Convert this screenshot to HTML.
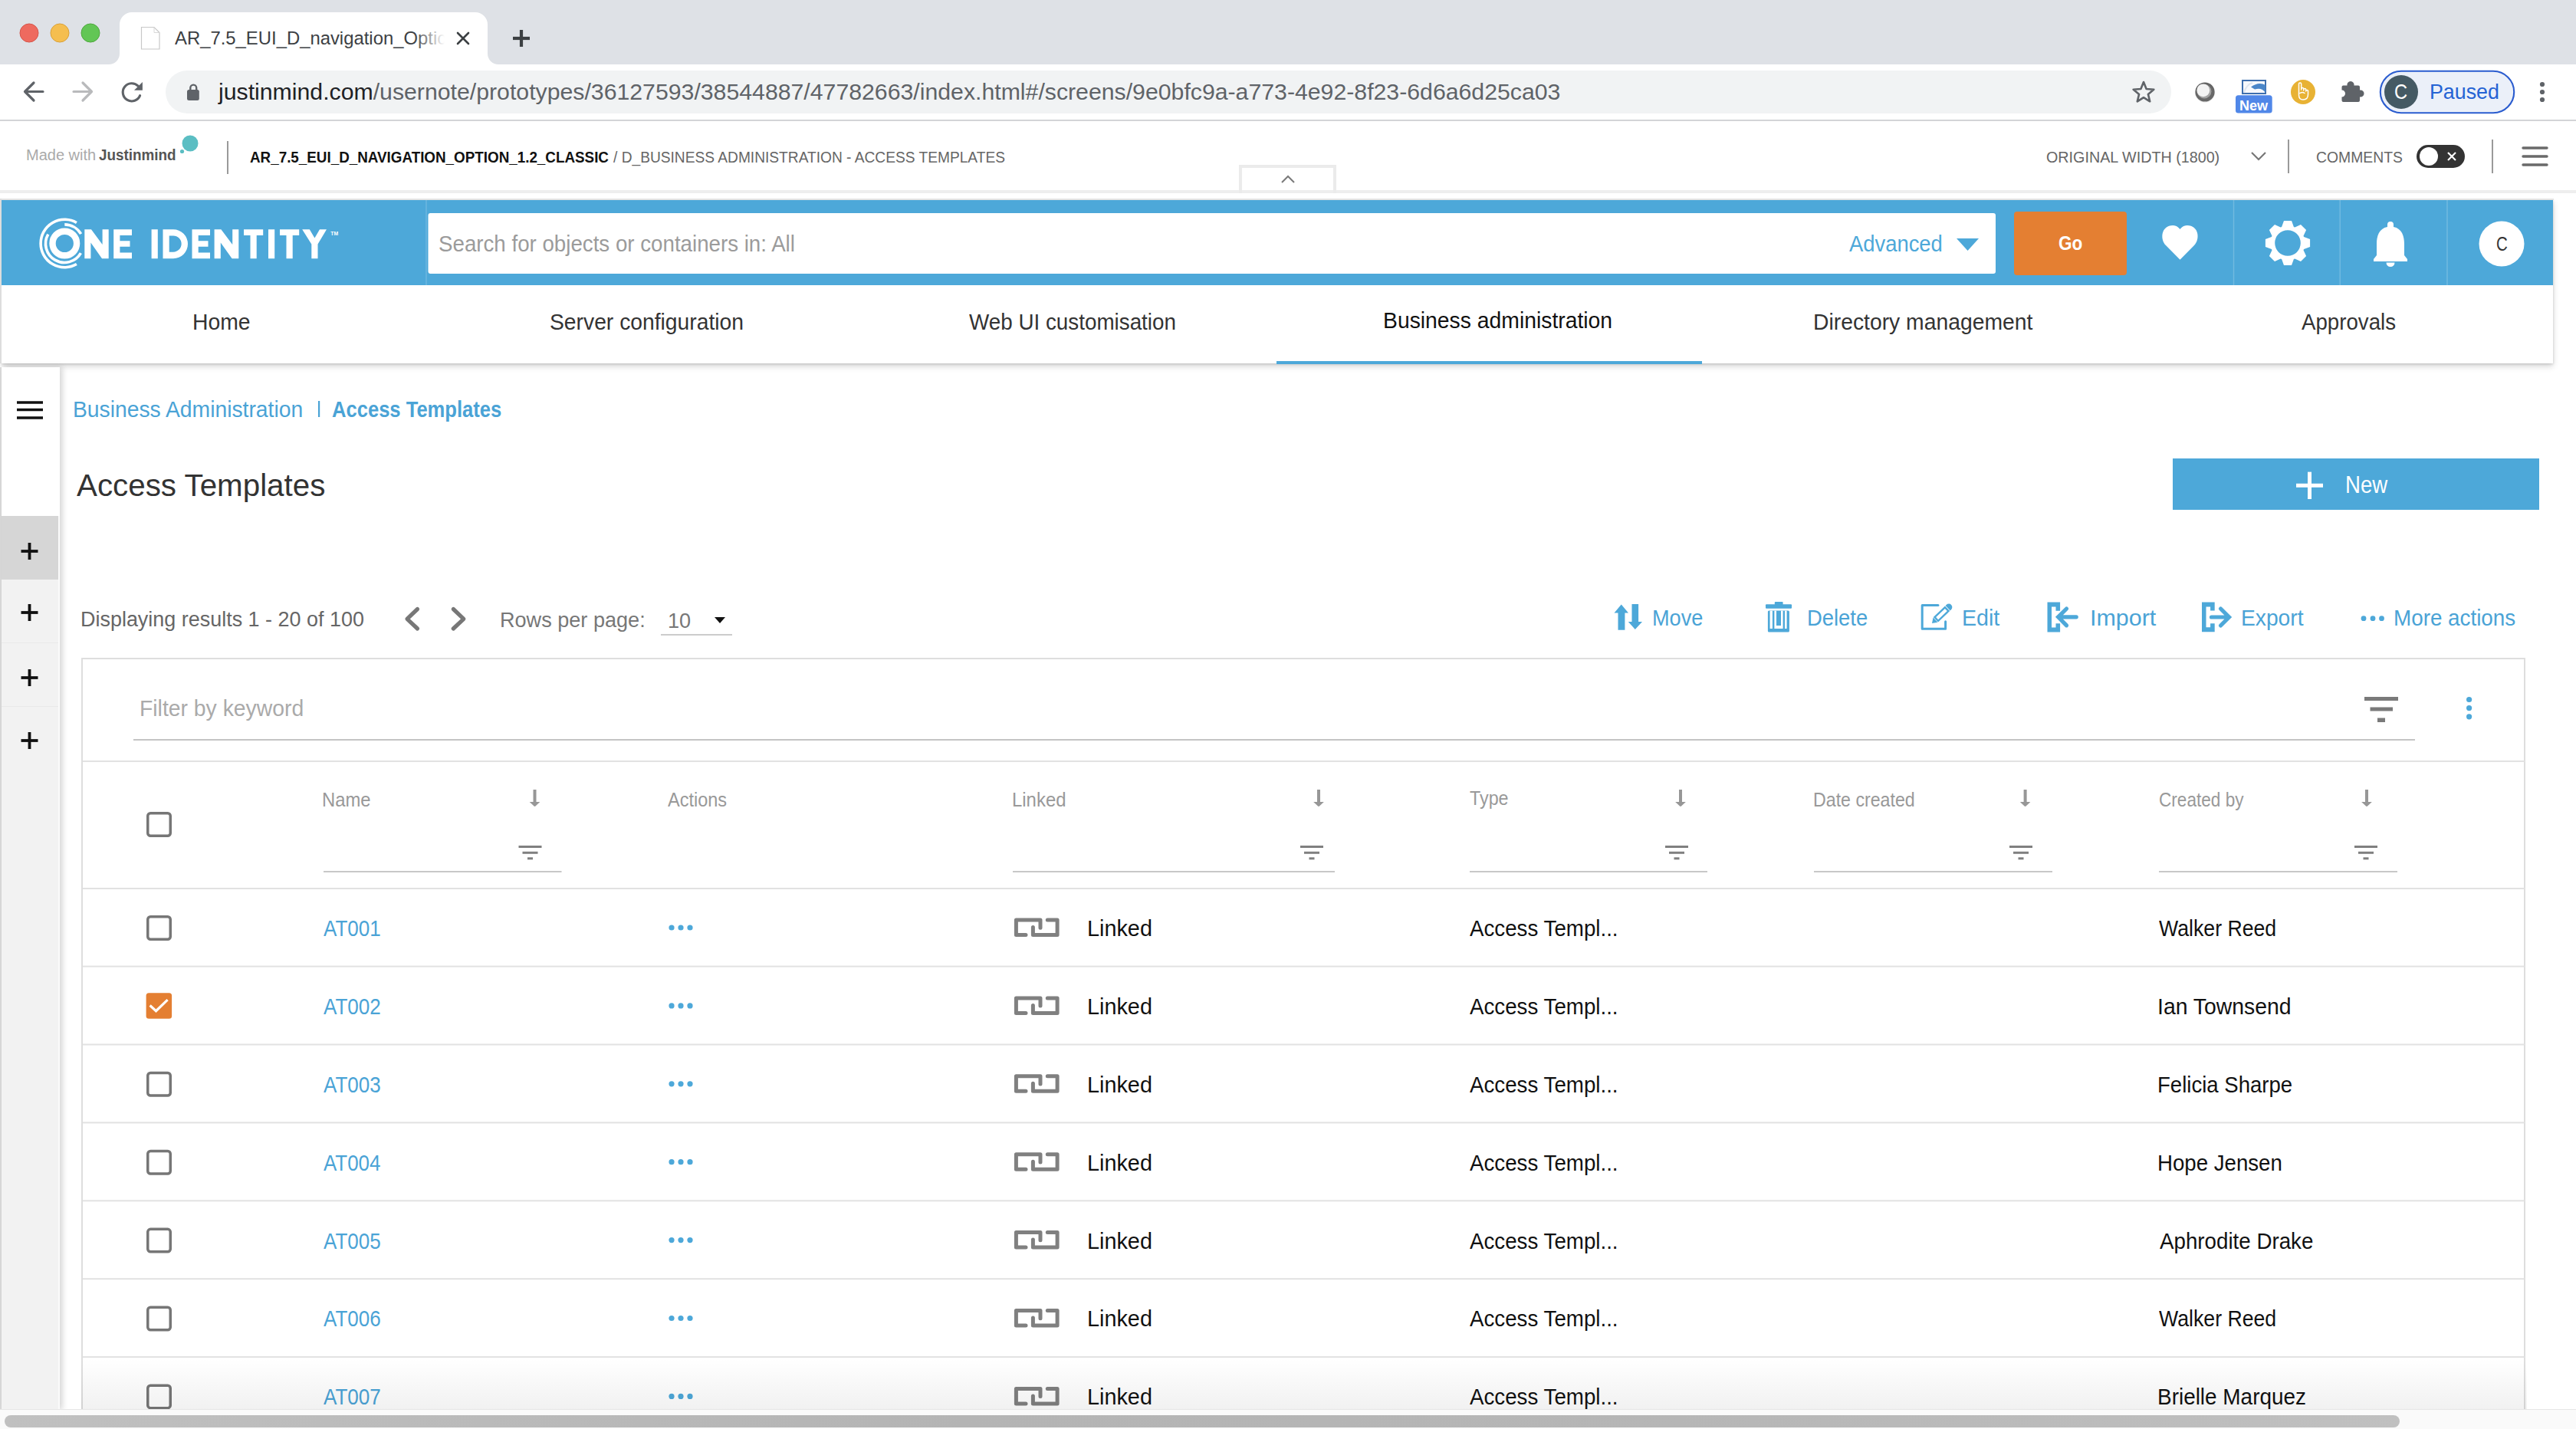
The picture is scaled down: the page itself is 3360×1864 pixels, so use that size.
<!DOCTYPE html>
<html><head><meta charset="utf-8"><title>Access Templates</title><style>
*{margin:0;padding:0;box-sizing:border-box}
html,body{width:3360px;height:1864px;overflow:hidden;background:#fff}
body{position:relative;font-family:"Liberation Sans",sans-serif}
.r{position:absolute}
.ov{position:absolute;left:0;top:0}
.t{position:absolute;white-space:nowrap;line-height:0;transform-origin:0 0;font-family:"Liberation Sans",sans-serif}
</style></head>
<body>

<div class="r" style="left:0;top:0;width:3360px;height:84px;background:#dee1e6"></div>
<div class="r" style="left:0;top:248px;width:3360px;height:4px;background:#eeeeee"></div>
<div class="r" style="left:2px;top:260px;width:3328px;height:214px;background:#fff;box-shadow:0 4px 8px rgba(0,0,0,0.16),0 1px 3px rgba(0,0,0,0.14)"></div>
<div class="r" style="left:0;top:252px;width:3360px;height:7px;background:#fff"></div>
<div class="r" style="left:0;top:259px;width:3331px;height:2px;background:#e3e3e3"></div>
<div class="r" style="left:0;top:259px;width:2px;height:215px;background:#dddddd"></div>
<div class="r" style="left:2px;top:261px;width:3328px;height:111px;background:#4da8d9"></div>
<div class="r" style="left:0;top:479px;width:2px;height:1360px;background:#dddddd"></div>
<div class="r" style="left:2px;top:479px;width:75.5px;height:1360px;background:#f2f2f2;box-shadow:3px 0 8px rgba(0,0,0,0.18)"></div>
<div class="r" style="left:2px;top:479px;width:75.5px;height:194px;background:#fff"></div>
<div class="r" style="left:2px;top:673px;width:75.5px;height:83px;background:#d6d6d6"></div>
<div class="r" style="left:2px;top:838px;width:75.5px;height:1px;background:#e9e9e9"></div>
<div class="r" style="left:2px;top:921px;width:75.5px;height:1px;background:#e9e9e9"></div>
<div class="r" style="left:75.6px;top:673px;width:2px;height:1166px;background:#fbfbfb"></div>

<svg class="ov" width="3360" height="1864" viewBox="0 0 3360 1864"><circle cx="38" cy="43" r="12" fill="#ee6a5f" stroke="#d5574c" stroke-width="1"/>
<circle cx="78" cy="43" r="12" fill="#f5be4f" stroke="#d9a13a" stroke-width="1"/>
<circle cx="118" cy="43" r="12" fill="#62c655" stroke="#4fa83f" stroke-width="1"/>
<path d="M142 84 A14 14 0 0 0 156 70 V32 A16 16 0 0 1 172 16 H620 A16 16 0 0 1 636 32 V70 A14 14 0 0 0 650 84 Z" fill="#ffffff" />
<path d="M184.5 35.5 H201 L208 42.5 V64 H184.5 Z" fill="#fff" stroke="#c8c8c8" stroke-width="1.2" />
<path d="M201 35.5 V42.5 H208" fill="none" stroke="#d8d8d8" stroke-width="1" />
<line x1="597" y1="43" x2="611" y2="57" stroke="#3c4043" stroke-width="2.6" stroke-linecap="round"/>
<line x1="611" y1="43" x2="597" y2="57" stroke="#3c4043" stroke-width="2.6" stroke-linecap="round"/>
<line x1="669" y1="50" x2="691" y2="50" stroke="#3c4043" stroke-width="4.2" stroke-linecap="butt"/>
<line x1="680" y1="39" x2="680" y2="61" stroke="#3c4043" stroke-width="4.2" stroke-linecap="butt"/>
<path d="M56 119.5 H33 M44 108 L32.5 119.5 L44 131" fill="none" stroke="#5f6368" stroke-width="3.2" stroke-linecap="round" stroke-linejoin="round"/>
<path d="M96 119.5 H119 M108 108 L119.5 119.5 L108 131" fill="none" stroke="#b9babc" stroke-width="3.2" stroke-linecap="round" stroke-linejoin="round"/>
<path d="M182.6 124.6 A11.6 11.6 0 1 1 180.1 112.2" fill="none" stroke="#5f6368" stroke-width="3.1" stroke-linecap="round"/>
<path d="M185.9 107 V117.8 H175 Z" fill="#5f6368" />
<rect x="216" y="92" width="2616" height="56" rx="28" fill="#f1f3f4"/>
<rect x="244" y="117" width="15.8" height="14" rx="2.5" fill="#5f6368"/>
<path d="M248.3 118 V114.6 A3.95 3.95 0 0 1 256.2 114.6 V118" fill="none" stroke="#5f6368" stroke-width="2.4" />
<polygon points="2796.0,107.0 2799.6,116.0 2809.3,116.7 2801.9,122.9 2804.2,132.3 2796.0,127.2 2787.8,132.3 2790.1,122.9 2782.7,116.7 2792.4,116.0" fill="none" stroke="#5f6368" stroke-width="2.6" stroke-linejoin="round"/>
<circle cx="2876" cy="120" r="12.6" fill="#686868"/>
<circle cx="2875.2" cy="119.2" r="9.2" fill="#a3a3a3"/>
<circle cx="2873.8" cy="117.8" r="8.4" fill="#f3f3f3"/>
<circle cx="2876" cy="120.8" r="12.6" fill="none" stroke="rgba(0,0,0,0.08)" stroke-width="1"/>
<rect x="2925" y="105" width="30" height="17" rx="0" fill="#f7f9fc" stroke="#3e6fae" stroke-width="2"/>
<path d="M2936 113.5 Q2946 106 2955 111 V121 Q2950 113.5 2941 116.5 Z" fill="#4a86c8" />
<path d="M2927 121 Q2930 110 2938 108" fill="none" stroke="#dfe6ef" stroke-width="2" />
<rect x="2916" y="124.2" width="47.7" height="23.3" rx="3.5" fill="#5087e8"/>
<text x="2939.5" y="143.6" font-family="Liberation Sans" font-weight="700" font-size="17.5" fill="#fff" text-anchor="middle" textLength="37" lengthAdjust="spacingAndGlyphs">New</text>
<circle cx="3004" cy="120" r="16" fill="#e8b234"/>
<path d="M2998.5 124 V109.5 A1.6 1.6 0 0 1 3001.7 109.5 V117 M3001.7 116 A1.5 1.5 0 0 1 3004.7 116 V118 M3004.7 117 A1.5 1.5 0 0 1 3007.7 117 V119 M3007.7 118.5 A1.5 1.5 0 0 1 3010.5 118.5 V123 Q3010.5 130 3004 130 Q2998.5 130 2998.5 124 M3000 121.5 Q3003 119.5 3006 121.5" fill="none" stroke="#fff" stroke-width="1.5" stroke-linecap="round" stroke-linejoin="round"/>
<path d="M3056.5 111.5 H3061.5 A4.6 4.6 0 1 1 3070.5 111.5 H3076 A2 2 0 0 1 3078 113.5 V117.5 A4.6 4.6 0 1 1 3078 126.5 V131 A2 2 0 0 1 3076 133 H3056.5 A2 2 0 0 1 3054.5 131 V126.5 A4.5 4.5 0 0 0 3054.5 117.5 V113.5 A2 2 0 0 1 3056.5 111.5 Z" fill="#5f6368" />
<rect x="3104.8" y="92.8" width="174.4" height="54.4" rx="27.2" fill="#ebf0f9" stroke="#2a5ccf" stroke-width="2.1"/>
<circle cx="3132" cy="120" r="22" fill="#455a64"/>
<circle cx="3316" cy="110" r="3.1" fill="#5f6368"/>
<circle cx="3316" cy="120" r="3.1" fill="#5f6368"/>
<circle cx="3316" cy="130" r="3.1" fill="#5f6368"/>
<rect x="0" y="156" width="3360" height="2" rx="0" fill="#d3d4d7"/>
<circle cx="248" cy="187" r="10.5" fill="#5bbec3"/>
<circle cx="237.5" cy="197.5" r="2.6" fill="#5bbec3"/>
<rect x="296" y="184" width="2" height="43" rx="0" fill="#9a9a9a"/>
<path d="M1618 252 V217 H1741 V252" fill="none" stroke="#ebebeb" stroke-width="4" />
<path d="M1672 238 L1680 230 L1688 238" fill="none" stroke="#7a7a7a" stroke-width="2" />
<path d="M2937 199 L2946 208 L2955 199" fill="none" stroke="#777" stroke-width="2.2" />
<rect x="2984" y="182" width="2" height="44" rx="0" fill="#9a9a9a"/>
<rect x="3152" y="189" width="63" height="30" rx="15" fill="#333333"/>
<circle cx="3168" cy="204" r="12" fill="#ffffff"/>
<line x1="3193" y1="199" x2="3203" y2="209" stroke="#fff" stroke-width="2.2" stroke-linecap="butt"/>
<line x1="3203" y1="199" x2="3193" y2="209" stroke="#fff" stroke-width="2.2" stroke-linecap="butt"/>
<rect x="3250" y="182" width="2" height="44" rx="0" fill="#9a9a9a"/>
<line x1="3291" y1="193" x2="3322" y2="193" stroke="#6a6a6a" stroke-width="3.4" stroke-linecap="round"/>
<line x1="3291" y1="204" x2="3322" y2="204" stroke="#6a6a6a" stroke-width="3.4" stroke-linecap="round"/>
<line x1="3291" y1="215" x2="3322" y2="215" stroke="#6a6a6a" stroke-width="3.4" stroke-linecap="round"/>
<circle cx="84.3" cy="317.5" r="15.8" fill="none" stroke="#fff" stroke-width="8.4"/>
<path d="M99.90 290.48 A31.2 31.2 0 1 0 99.90 344.52" fill="none" stroke="#fff" stroke-width="3.6" />
<path d="M84.30 292.90 A24.6 24.6 0 0 1 105.60 305.20" fill="none" stroke="#fff" stroke-width="3.6" />
<path d="M105.39 330.17 A24.6 24.6 0 0 1 62.78 305.57" fill="none" stroke="#fff" stroke-width="3.6" />
<path d="M110.3 337.3 V299.3 H119 L133.6 319 V299.3 H141.7 V337.3 H133 L118.4 316.6 V337.3 Z M148.2 299.3 H172 V307.0 H156.39999999999998 V314.2 H169.5 V321.7 H156.39999999999998 V329.6 H172 V337.3 H148.2 Z M197.6 299.3 H205.8 V337.3 H197.6 Z M212.5 299.3 H226 A19 19 0 0 1 226 337.3 H212.5 Z M220.7 307.4 V328.7 H226 A10.65 10.65 0 0 0 226 307.4 Z M250.5 299.3 H274 V307.0 H258.7 V314.2 H271.5 V321.7 H258.7 V329.6 H274 V337.3 H250.5 Z M279.6 337.3 V299.3 H288.4 L303.2 319 V299.3 H311.3 V337.3 H302.6 L287.8 316.6 V337.3 Z M318 299.3 H343.2 V307.0 H334.7 V337.3 H326.5 V307.0 H318 Z M350 299.3 H358.2 V337.3 H350 Z M365 299.3 H390.2 V307.0 H381.7 V337.3 H373.5 V307.0 H365 Z M394.2 299.3 H403.8 L410.4 310.5 L417 299.3 H426 L414.5 318.5 V337.3 H406.3 V318.5 Z" fill="#fff" fill-rule="evenodd"/>
<text x="431.3" y="306.6" font-family="Liberation Sans" font-weight="700" font-size="7.4" fill="#fff" textLength="9.8" lengthAdjust="spacingAndGlyphs">TM</text>
<line x1="556" y1="261" x2="556" y2="372" stroke="rgba(255,255,255,0.18)" stroke-width="1.5" stroke-linecap="butt"/>
<rect x="558.5" y="278" width="2044.5" height="79" rx="3" fill="#ffffff"/>
<path d="M2552 311 H2581 L2566.5 327 Z" fill="#4da8d9" />
<rect x="2627" y="276" width="147" height="83" rx="4" fill="#e47f32"/>
<path d="M2843.5 338.8 L2825 320 C2817 312 2819 294 2834.2 294 C2840 294 2843.5 299 2843.5 299 C2843.5 299 2847 294 2852.8 294 C2868 294 2870 312 2862 320 Z" fill="#fff" />
<line x1="2913.5" y1="261" x2="2913.5" y2="372" stroke="rgba(255,255,255,0.2)" stroke-width="1.5" stroke-linecap="butt"/>
<line x1="3052.2" y1="261" x2="3052.2" y2="372" stroke="rgba(255,255,255,0.2)" stroke-width="1.5" stroke-linecap="butt"/>
<line x1="3192" y1="261" x2="3192" y2="372" stroke="rgba(255,255,255,0.2)" stroke-width="1.5" stroke-linecap="butt"/>
<path d="M2976.1 295.9 L2979.0 287.9 L2989.0 287.9 L2991.9 295.9 L2993.3 296.5 L3001.0 292.9 L3008.1 300.0 L3004.5 307.7 L3005.1 309.1 L3013.1 312.0 L3013.1 322.0 L3005.1 324.9 L3004.5 326.3 L3008.1 334.0 L3001.0 341.1 L2993.3 337.5 L2991.9 338.1 L2989.0 346.1 L2979.0 346.1 L2976.1 338.1 L2974.7 337.5 L2967.0 341.1 L2959.9 334.0 L2963.5 326.3 L2962.9 324.9 L2954.9 322.0 L2954.9 312.0 L2962.9 309.1 L2963.5 307.7 L2959.9 300.0 L2967.0 292.9 L2974.7 296.5 Z M3000.8 317 A16.8 16.8 0 1 0 2967.2 317 A16.8 16.8 0 1 0 3000.8 317 Z" fill="#fff" fill-rule="evenodd"/>
<path d="M3118 289 A4 4 0 0 1 3122 293 V296 C3133 298 3136 308 3136 318 V333 L3140 338 V341 H3096 V338 L3100 333 V318 C3100 308 3103 298 3114 296 V293 A4 4 0 0 1 3118 289 Z M3112.5 342.5 H3123.5 A5.5 5.5 0 0 1 3112.5 342.5 Z" fill="#fff" />
<circle cx="3263" cy="318" r="29.5" fill="#ffffff"/>
<rect x="1665" y="471" width="555" height="4" rx="0" fill="#4da8d9"/>
<line x1="22" y1="525" x2="56" y2="525" stroke="#111" stroke-width="3.6" stroke-linecap="butt"/>
<line x1="22" y1="534.5" x2="56" y2="534.5" stroke="#111" stroke-width="3.6" stroke-linecap="butt"/>
<line x1="22" y1="545" x2="56" y2="545" stroke="#111" stroke-width="3.6" stroke-linecap="butt"/>
<line x1="27.5" y1="719" x2="49.5" y2="719" stroke="#111" stroke-width="3.8" stroke-linecap="butt"/>
<line x1="38.5" y1="708" x2="38.5" y2="730" stroke="#111" stroke-width="3.8" stroke-linecap="butt"/>
<line x1="27.5" y1="799" x2="49.5" y2="799" stroke="#111" stroke-width="3.8" stroke-linecap="butt"/>
<line x1="38.5" y1="788" x2="38.5" y2="810" stroke="#111" stroke-width="3.8" stroke-linecap="butt"/>
<line x1="27.5" y1="884" x2="49.5" y2="884" stroke="#111" stroke-width="3.8" stroke-linecap="butt"/>
<line x1="38.5" y1="873" x2="38.5" y2="895" stroke="#111" stroke-width="3.8" stroke-linecap="butt"/>
<line x1="27.5" y1="966" x2="49.5" y2="966" stroke="#111" stroke-width="3.8" stroke-linecap="butt"/>
<line x1="38.5" y1="955" x2="38.5" y2="977" stroke="#111" stroke-width="3.8" stroke-linecap="butt"/>
<rect x="2834" y="598" width="478" height="67" rx="0" fill="#4da8d9"/>
<line x1="2995" y1="633.3" x2="3030" y2="633.3" stroke="#fff" stroke-width="5" stroke-linecap="butt"/>
<line x1="3012.5" y1="615.6" x2="3012.5" y2="651" stroke="#fff" stroke-width="5" stroke-linecap="butt"/>
<path d="M544.5 794.5 L531 807.3 L544.5 820" fill="none" stroke="#777777" stroke-width="5.2" stroke-linejoin="round" stroke-linecap="round"/>
<path d="M591.3 794.5 L604.8 807.3 L591.3 820" fill="none" stroke="#777777" stroke-width="5.2" stroke-linejoin="round" stroke-linecap="round"/>
<path d="M932 805 H946 L939 813 Z" fill="#111" />
<rect x="862" y="827" width="93" height="2" rx="0" fill="#cccccc"/>
<rect x="415" y="523" width="2.2" height="21" rx="0" fill="#4aa3d6"/>
<path d="M2114.75 788.4 L2124 799.4 H2119.4 V821.7 H2110.5 V799.4 H2105.5 Z" fill="#4da8d9" stroke-linejoin="round"/>
<path d="M2128.5 788 H2137.1 V811 H2142 L2132.8 821 L2123.8 811 H2128.5 Z" fill="#4da8d9" />
<rect x="2314.8" y="785" width="10.8" height="4.5" rx="1" fill="#4da8d9"/>
<rect x="2303" y="788.2" width="34" height="5.5" rx="1" fill="#4da8d9"/>
<rect x="2305.9" y="796.6" width="28" height="28" rx="1.5" fill="#4da8d9"/>
<rect x="2308.6" y="796.6" width="3.3" height="23.4" rx="0" fill="#fff"/>
<rect x="2314.4" y="796.6" width="2.6" height="23.4" rx="0" fill="#fff"/>
<rect x="2323" y="796.6" width="2.6" height="23.4" rx="0" fill="#fff"/>
<rect x="2328" y="796.6" width="2.6" height="23.4" rx="0" fill="#fff"/>
<rect x="2317" y="816" width="6" height="4" rx="0" fill="#fff"/>
<path d="M2528 789.6 H2507.2 V820.2 H2537.6 V810.8" fill="none" stroke="#4da8d9" stroke-width="3" stroke-linecap="round" stroke-linejoin="round"/>
<g transform="translate(2520,813) rotate(-43.8)" fill="#4da8d9">
<polygon points="0,0 6.2,-4.3 6.2,4.3"/>
<rect x="8" y="-3.3" width="18.6" height="6.6" fill="none" stroke="#4da8d9" stroke-width="2.4"/>
<path d="M28.6 -4.4 H30.4 A4.4 4.4 0 0 1 30.4 4.4 H28.6 Z"/>
</g>
<path d="M2670.5 785.6 H2687.1 V796.7 H2681.5 V791.6 H2676 V818.4 H2681.5 V813.3 H2687.1 V824.4 H2670.5 Z" fill="#4da8d9" />
<path d="M2708.2 804.8 H2685 M2695.5 794 L2684.6 804.8 L2695.5 815.8" fill="none" stroke="#4da8d9" stroke-width="5.2" stroke-linecap="round" stroke-linejoin="miter"/>
<path d="M2872 785.4 H2888.7 V796.5 H2883.1 V791.4 H2877.5 V818.3 H2883.1 V813.2 H2888.7 V824.3 H2872 Z" fill="#4da8d9" />
<path d="M2884.5 805 H2907 M2896.5 794 L2907.5 805 L2896.5 816" fill="none" stroke="#4da8d9" stroke-width="5.2" stroke-linecap="round" stroke-linejoin="miter"/>
<circle cx="3083" cy="806.7" r="3.4" fill="#4da8d9"/>
<circle cx="3095" cy="806.7" r="3.4" fill="#4da8d9"/>
<circle cx="3106.5" cy="806.7" r="3.4" fill="#4da8d9"/>
<rect x="107" y="859" width="3186" height="1100" rx="0" fill="#ffffff" stroke="#dedede" stroke-width="2"/>
<rect x="174" y="964" width="2976" height="2" rx="0" fill="#c4c4c4"/>
<rect x="3084" y="909" width="44" height="5" rx="0" fill="#7a7a7a"/>
<rect x="3091.5" y="922.5" width="29.5" height="5" rx="0" fill="#7a7a7a"/>
<rect x="3101" y="936.5" width="10" height="5.5" rx="0" fill="#7a7a7a"/>
<circle cx="3220.6" cy="912.5" r="3.6" fill="#4da8d9"/>
<circle cx="3220.6" cy="923.6" r="3.6" fill="#4da8d9"/>
<circle cx="3220.6" cy="934.8" r="3.6" fill="#4da8d9"/>
<rect x="108" y="992" width="3185" height="2" rx="0" fill="#e2e2e2"/>
<rect x="108" y="1158" width="3185" height="2" rx="0" fill="#e2e2e2"/>
<rect x="108" y="1259.6" width="3185" height="2" rx="0" fill="#e2e2e2"/>
<rect x="108" y="1361.5" width="3185" height="2" rx="0" fill="#e2e2e2"/>
<rect x="108" y="1463.4" width="3185" height="2" rx="0" fill="#e2e2e2"/>
<rect x="108" y="1565.3" width="3185" height="2" rx="0" fill="#e2e2e2"/>
<rect x="108" y="1667.2" width="3185" height="2" rx="0" fill="#e2e2e2"/>
<rect x="108" y="1769.1" width="3185" height="2" rx="0" fill="#e2e2e2"/>
<rect x="192.75" y="1060.75" width="29.5" height="29.5" rx="3.5" fill="none" stroke="#767676" stroke-width="3.5"/>
<rect x="695.5" y="1030" width="4" height="16.5" rx="0" fill="#979797"/>
<path d="M690.7 1046 H704.3 L698.5 1051.5 Q697.5 1052.4 696.5 1051.5 Z" fill="#979797" />
<rect x="676.5" y="1103" width="30" height="3" rx="0" fill="#808080"/>
<rect x="681.5" y="1110.8" width="20" height="3" rx="0" fill="#808080"/>
<rect x="688.0" y="1118.3" width="7" height="3" rx="0" fill="#808080"/>
<rect x="422" y="1136" width="310.5" height="2" rx="0" fill="#c8c8c8"/>
<rect x="1718" y="1030" width="4" height="16.5" rx="0" fill="#979797"/>
<path d="M1713.2 1046 H1726.8 L1721 1051.5 Q1720 1052.4 1719 1051.5 Z" fill="#979797" />
<rect x="1696" y="1103" width="30" height="3" rx="0" fill="#808080"/>
<rect x="1701" y="1110.8" width="20" height="3" rx="0" fill="#808080"/>
<rect x="1707.5" y="1118.3" width="7" height="3" rx="0" fill="#808080"/>
<rect x="1321" y="1136" width="420" height="2" rx="0" fill="#c8c8c8"/>
<rect x="2190" y="1030" width="4" height="16.5" rx="0" fill="#979797"/>
<path d="M2185.2 1046 H2198.8 L2193 1051.5 Q2192 1052.4 2191 1051.5 Z" fill="#979797" />
<rect x="2172" y="1103" width="30" height="3" rx="0" fill="#808080"/>
<rect x="2177" y="1110.8" width="20" height="3" rx="0" fill="#808080"/>
<rect x="2183.5" y="1118.3" width="7" height="3" rx="0" fill="#808080"/>
<rect x="1917" y="1136" width="310" height="2" rx="0" fill="#c8c8c8"/>
<rect x="2639.6" y="1030" width="4" height="16.5" rx="0" fill="#979797"/>
<path d="M2634.7999999999997 1046 H2648.4 L2642.6 1051.5 Q2641.6 1052.4 2640.6 1051.5 Z" fill="#979797" />
<rect x="2621" y="1103" width="30" height="3" rx="0" fill="#808080"/>
<rect x="2626" y="1110.8" width="20" height="3" rx="0" fill="#808080"/>
<rect x="2632.5" y="1118.3" width="7" height="3" rx="0" fill="#808080"/>
<rect x="2366" y="1136" width="311" height="2" rx="0" fill="#c8c8c8"/>
<rect x="3085" y="1030" width="4" height="16.5" rx="0" fill="#979797"/>
<path d="M3080.2 1046 H3093.8 L3088 1051.5 Q3087 1052.4 3086 1051.5 Z" fill="#979797" />
<rect x="3071" y="1103" width="30" height="3" rx="0" fill="#808080"/>
<rect x="3076" y="1110.8" width="20" height="3" rx="0" fill="#808080"/>
<rect x="3082.5" y="1118.3" width="7" height="3" rx="0" fill="#808080"/>
<rect x="2816" y="1136" width="311" height="2" rx="0" fill="#c8c8c8"/>
<rect x="192.75" y="1195.75" width="29.5" height="29.5" rx="3.5" fill="none" stroke="#767676" stroke-width="3.5"/>
<circle cx="876" cy="1210.0" r="3.6" fill="#4da8d9"/>
<circle cx="888" cy="1210.0" r="3.6" fill="#4da8d9"/>
<circle cx="900" cy="1210.0" r="3.6" fill="#4da8d9"/>
<g transform="translate(1310,1185.0)"><path d="M28 34.5 H15.4 V15 H47 V25.2 M56.3 15 H69.1 V34.5 H37.4 V24.5" fill="none" stroke="#808080" stroke-width="5" stroke-linecap="round" stroke-linejoin="round"/></g>
<rect x="190.6" y="1295.3000000000002" width="33.5" height="33.5" rx="3.5" fill="#e47f32"/>
<path d="M195.6 1311.5 L203.5 1318.7 L218.6 1304.1000000000001" fill="none" stroke="#fff" stroke-width="3.2" />
<circle cx="876" cy="1311.9" r="3.6" fill="#4da8d9"/>
<circle cx="888" cy="1311.9" r="3.6" fill="#4da8d9"/>
<circle cx="900" cy="1311.9" r="3.6" fill="#4da8d9"/>
<g transform="translate(1310,1286.9)"><path d="M28 34.5 H15.4 V15 H47 V25.2 M56.3 15 H69.1 V34.5 H37.4 V24.5" fill="none" stroke="#808080" stroke-width="5" stroke-linecap="round" stroke-linejoin="round"/></g>
<rect x="192.75" y="1399.55" width="29.5" height="29.5" rx="3.5" fill="none" stroke="#767676" stroke-width="3.5"/>
<circle cx="876" cy="1413.8" r="3.6" fill="#4da8d9"/>
<circle cx="888" cy="1413.8" r="3.6" fill="#4da8d9"/>
<circle cx="900" cy="1413.8" r="3.6" fill="#4da8d9"/>
<g transform="translate(1310,1388.8)"><path d="M28 34.5 H15.4 V15 H47 V25.2 M56.3 15 H69.1 V34.5 H37.4 V24.5" fill="none" stroke="#808080" stroke-width="5" stroke-linecap="round" stroke-linejoin="round"/></g>
<rect x="192.75" y="1501.45" width="29.5" height="29.5" rx="3.5" fill="none" stroke="#767676" stroke-width="3.5"/>
<circle cx="876" cy="1515.7" r="3.6" fill="#4da8d9"/>
<circle cx="888" cy="1515.7" r="3.6" fill="#4da8d9"/>
<circle cx="900" cy="1515.7" r="3.6" fill="#4da8d9"/>
<g transform="translate(1310,1490.7)"><path d="M28 34.5 H15.4 V15 H47 V25.2 M56.3 15 H69.1 V34.5 H37.4 V24.5" fill="none" stroke="#808080" stroke-width="5" stroke-linecap="round" stroke-linejoin="round"/></g>
<rect x="192.75" y="1603.35" width="29.5" height="29.5" rx="3.5" fill="none" stroke="#767676" stroke-width="3.5"/>
<circle cx="876" cy="1617.6" r="3.6" fill="#4da8d9"/>
<circle cx="888" cy="1617.6" r="3.6" fill="#4da8d9"/>
<circle cx="900" cy="1617.6" r="3.6" fill="#4da8d9"/>
<g transform="translate(1310,1592.6)"><path d="M28 34.5 H15.4 V15 H47 V25.2 M56.3 15 H69.1 V34.5 H37.4 V24.5" fill="none" stroke="#808080" stroke-width="5" stroke-linecap="round" stroke-linejoin="round"/></g>
<rect x="192.75" y="1705.25" width="29.5" height="29.5" rx="3.5" fill="none" stroke="#767676" stroke-width="3.5"/>
<circle cx="876" cy="1719.5" r="3.6" fill="#4da8d9"/>
<circle cx="888" cy="1719.5" r="3.6" fill="#4da8d9"/>
<circle cx="900" cy="1719.5" r="3.6" fill="#4da8d9"/>
<g transform="translate(1310,1694.5)"><path d="M28 34.5 H15.4 V15 H47 V25.2 M56.3 15 H69.1 V34.5 H37.4 V24.5" fill="none" stroke="#808080" stroke-width="5" stroke-linecap="round" stroke-linejoin="round"/></g>
<rect x="192.75" y="1807.15" width="29.5" height="29.5" rx="3.5" fill="none" stroke="#767676" stroke-width="3.5"/>
<circle cx="876" cy="1821.4" r="3.6" fill="#4da8d9"/>
<circle cx="888" cy="1821.4" r="3.6" fill="#4da8d9"/>
<circle cx="900" cy="1821.4" r="3.6" fill="#4da8d9"/>
<g transform="translate(1310,1796.4)"><path d="M28 34.5 H15.4 V15 H47 V25.2 M56.3 15 H69.1 V34.5 H37.4 V24.5" fill="none" stroke="#808080" stroke-width="5" stroke-linecap="round" stroke-linejoin="round"/></g></svg>
<div class="t" style="left:228.4px;top:49.7px;font-size:24.50px;color:#3c4043;transform:scaleX(0.9739);">AR_7.5_EUI_D_navigation_Optic</div>
<div class="t" style="left:284.8px;top:119.6px;font-size:29.00px;color:#5f6368;transform:scaleX(1.0429);"><span style="color:#202124">justinmind.com</span>/usernote/prototypes/36127593/38544887/47782663/index.html#/screens/9e0bfc9a-a773-4e92-8f23-6d6a6d25ca03</div>
<div class="t" style="left:3168.9px;top:120.4px;font-size:26.89px;color:#2563d4;transform:scaleX(0.9971);">Paused</div>
<div class="t" style="left:3122.8px;top:119.5px;font-size:27.91px;color:#ffffff;transform:scaleX(0.8465);">C</div>
<div class="t" style="left:33.9px;top:201.5px;font-size:19.91px;color:#aaaaaa;transform:scaleX(1.0044);">Made with</div>
<div class="t" style="left:128.9px;top:201.5px;font-size:19.91px;color:#555555;font-weight:700;transform:scaleX(0.9480);">Justinmind</div>
<div class="t" style="left:326.2px;top:204.7px;font-size:21.08px;color:#111111;font-weight:700;transform:scaleX(0.8931);">AR_7.5_EUI_D_NAVIGATION_OPTION_1.2_CLASSIC</div>
<div class="t" style="left:800.0px;top:204.7px;font-size:21.08px;color:#666666;transform:scaleX(0.9089);">/ D_BUSINESS ADMINISTRATION - ACCESS TEMPLATES</div>
<div class="t" style="left:2669.1px;top:204.7px;font-size:21.08px;color:#666666;transform:scaleX(0.9360);">ORIGINAL WIDTH (1800)</div>
<div class="t" style="left:3021.0px;top:204.7px;font-size:21.08px;color:#666666;transform:scaleX(0.9184);">COMMENTS</div>
<div class="t" style="left:571.8px;top:317.7px;font-size:29.65px;color:#9b9b9b;transform:scaleX(0.9344);">Search for objects or containers in: All</div>
<div class="t" style="left:2412.0px;top:317.7px;font-size:29.65px;color:#4da8d9;transform:scaleX(0.9240);">Advanced</div>
<div class="t" style="left:2685.1px;top:317.3px;font-size:25.00px;color:#ffffff;font-weight:700;transform:scaleX(0.9038);">Go</div>
<div class="t" style="left:3256.0px;top:317.5px;font-size:25.00px;color:#333333;transform:scaleX(0.8189);">C</div>
<div class="t" style="left:250.7px;top:419.9px;font-size:29.07px;color:#333333;transform:scaleX(0.9751);">Home</div>
<div class="t" style="left:716.7px;top:419.9px;font-size:29.07px;color:#333333;transform:scaleX(0.9729);">Server configuration</div>
<div class="t" style="left:1263.9px;top:419.9px;font-size:29.07px;color:#333333;transform:scaleX(0.9568);">Web UI customisation</div>
<div class="t" style="left:2364.7px;top:419.9px;font-size:29.07px;color:#333333;transform:scaleX(0.9740);">Directory management</div>
<div class="t" style="left:3002.0px;top:419.9px;font-size:29.07px;color:#333333;transform:scaleX(0.9517);">Approvals</div>
<div class="t" style="left:1803.7px;top:417.7px;font-size:29.80px;color:#111111;transform:scaleX(0.9506);">Business administration</div>
<div class="t" style="left:94.7px;top:533.7px;font-size:29.80px;color:#4aa3d6;transform:scaleX(0.9488);">Business Administration</div>
<div class="t" style="left:432.9px;top:533.7px;font-size:29.80px;color:#4aa3d6;font-weight:700;transform:scaleX(0.8581);">Access Templates</div>
<div class="t" style="left:100.0px;top:632.9px;font-size:40.70px;color:#333333;transform:scaleX(0.9915);">Access Templates</div>
<div class="t" style="left:3058.8px;top:631.5px;font-size:31.69px;color:#ffffff;transform:scaleX(0.8689);">New</div>
<div class="t" style="left:104.8px;top:807.2px;font-size:28.34px;color:#666666;transform:scaleX(0.9510);">Displaying results 1 - 20 of 100</div>
<div class="t" style="left:652.1px;top:807.7px;font-size:28.49px;color:#777777;transform:scaleX(0.9508);">Rows per page:</div>
<div class="t" style="left:870.7px;top:810.2px;font-size:26.89px;color:#777777;transform:scaleX(1.0078);">10</div>
<div class="t" style="left:2155.3px;top:806.2px;font-size:29.80px;color:#4aa3d6;transform:scaleX(0.9099);">Move</div>
<div class="t" style="left:2356.8px;top:806.2px;font-size:29.80px;color:#4aa3d6;transform:scaleX(0.9188);">Delete</div>
<div class="t" style="left:2558.7px;top:806.2px;font-size:29.80px;color:#4aa3d6;transform:scaleX(0.9606);">Edit</div>
<div class="t" style="left:2726.1px;top:806.2px;font-size:29.80px;color:#4aa3d6;transform:scaleX(1.0209);">Import</div>
<div class="t" style="left:2922.7px;top:806.2px;font-size:29.80px;color:#4aa3d6;transform:scaleX(0.9469);">Export</div>
<div class="t" style="left:3121.8px;top:806.2px;font-size:29.80px;color:#4aa3d6;transform:scaleX(0.9332);">More actions</div>
<div class="t" style="left:181.7px;top:923.7px;font-size:29.80px;color:#aaaaaa;transform:scaleX(0.9511);">Filter by keyword</div>
<div class="t" style="left:420.1px;top:1042.8px;font-size:25.87px;color:#999999;transform:scaleX(0.9222);">Name</div>
<div class="t" style="left:871.0px;top:1042.8px;font-size:25.87px;color:#999999;transform:scaleX(0.9088);">Actions</div>
<div class="t" style="left:1320.1px;top:1042.8px;font-size:25.87px;color:#999999;transform:scaleX(0.9249);">Linked</div>
<div class="t" style="left:2365.1px;top:1042.8px;font-size:25.87px;color:#999999;transform:scaleX(0.8963);">Date created</div>
<div class="t" style="left:2815.5px;top:1042.8px;font-size:25.87px;color:#999999;transform:scaleX(0.8737);">Created by</div>
<div class="t" style="left:1916.5px;top:1040.7px;font-size:25.44px;color:#999999;transform:scaleX(0.9173);">Type</div>
<div class="t" style="left:422.0px;top:1210.9px;font-size:29.07px;color:#4aa3d6;transform:scaleX(0.8950);">AT001</div>
<div class="t" style="left:1417.7px;top:1210.9px;font-size:29.07px;color:#111111;transform:scaleX(0.9915);">Linked</div>
<div class="t" style="left:1917.0px;top:1210.9px;font-size:29.07px;color:#111111;transform:scaleX(0.9536);">Access Templ...</div>
<div class="t" style="left:2816.4px;top:1210.9px;font-size:29.07px;color:#111111;transform:scaleX(0.9179);">Walker Reed</div>
<div class="t" style="left:422.0px;top:1312.8px;font-size:29.07px;color:#4aa3d6;transform:scaleX(0.8966);">AT002</div>
<div class="t" style="left:1417.7px;top:1312.8px;font-size:29.07px;color:#111111;transform:scaleX(0.9915);">Linked</div>
<div class="t" style="left:1917.0px;top:1312.8px;font-size:29.07px;color:#111111;transform:scaleX(0.9536);">Access Templ...</div>
<div class="t" style="left:2813.9px;top:1312.8px;font-size:29.07px;color:#111111;transform:scaleX(0.9766);">Ian Townsend</div>
<div class="t" style="left:422.0px;top:1414.7px;font-size:29.07px;color:#4aa3d6;transform:scaleX(0.8934);">AT003</div>
<div class="t" style="left:1417.7px;top:1414.7px;font-size:29.07px;color:#111111;transform:scaleX(0.9915);">Linked</div>
<div class="t" style="left:1917.0px;top:1414.7px;font-size:29.07px;color:#111111;transform:scaleX(0.9536);">Access Templ...</div>
<div class="t" style="left:2814.3px;top:1414.7px;font-size:29.07px;color:#111111;transform:scaleX(0.9483);">Felicia Sharpe</div>
<div class="t" style="left:422.0px;top:1516.6px;font-size:29.07px;color:#4aa3d6;transform:scaleX(0.8903);">AT004</div>
<div class="t" style="left:1417.7px;top:1516.6px;font-size:29.07px;color:#111111;transform:scaleX(0.9915);">Linked</div>
<div class="t" style="left:1917.0px;top:1516.6px;font-size:29.07px;color:#111111;transform:scaleX(0.9536);">Access Templ...</div>
<div class="t" style="left:2814.3px;top:1516.6px;font-size:29.07px;color:#111111;transform:scaleX(0.9509);">Hope Jensen</div>
<div class="t" style="left:422.0px;top:1618.5px;font-size:29.07px;color:#4aa3d6;transform:scaleX(0.8934);">AT005</div>
<div class="t" style="left:1417.7px;top:1618.5px;font-size:29.07px;color:#111111;transform:scaleX(0.9915);">Linked</div>
<div class="t" style="left:1917.0px;top:1618.5px;font-size:29.07px;color:#111111;transform:scaleX(0.9536);">Access Templ...</div>
<div class="t" style="left:2816.5px;top:1618.5px;font-size:29.07px;color:#111111;transform:scaleX(0.9539);">Aphrodite Drake</div>
<div class="t" style="left:422.0px;top:1720.4px;font-size:29.07px;color:#4aa3d6;transform:scaleX(0.8934);">AT006</div>
<div class="t" style="left:1417.7px;top:1720.4px;font-size:29.07px;color:#111111;transform:scaleX(0.9915);">Linked</div>
<div class="t" style="left:1917.0px;top:1720.4px;font-size:29.07px;color:#111111;transform:scaleX(0.9536);">Access Templ...</div>
<div class="t" style="left:2816.4px;top:1720.4px;font-size:29.07px;color:#111111;transform:scaleX(0.9179);">Walker Reed</div>
<div class="t" style="left:422.0px;top:1822.3px;font-size:29.07px;color:#4aa3d6;transform:scaleX(0.8966);">AT007</div>
<div class="t" style="left:1417.7px;top:1822.3px;font-size:29.07px;color:#111111;transform:scaleX(0.9915);">Linked</div>
<div class="t" style="left:1917.0px;top:1822.3px;font-size:29.07px;color:#111111;transform:scaleX(0.9536);">Access Templ...</div>
<div class="t" style="left:2814.3px;top:1822.3px;font-size:29.07px;color:#111111;transform:scaleX(0.9609);">Brielle Marquez</div>

<div class="r" style="left:540px;top:20px;width:50px;height:60px;background:linear-gradient(to right,rgba(255,255,255,0),#fff 80%)"></div>
<div class="r" style="left:0;top:1838px;width:3360px;height:26px;background:#fafafa;border-top:1px solid #e6e6e6"></div>
<div class="r" style="left:106px;top:1772px;width:3190px;height:66px;background:linear-gradient(rgba(0,0,0,0),rgba(0,0,0,0.055))"></div>
<div class="r" style="left:6px;top:1846px;width:3124px;height:16px;border-radius:8px;background:linear-gradient(to right,#c0c0c0,#b4b4b4 40%,#b6b6b6 70%,#c0c0c0)"></div>

</body></html>
